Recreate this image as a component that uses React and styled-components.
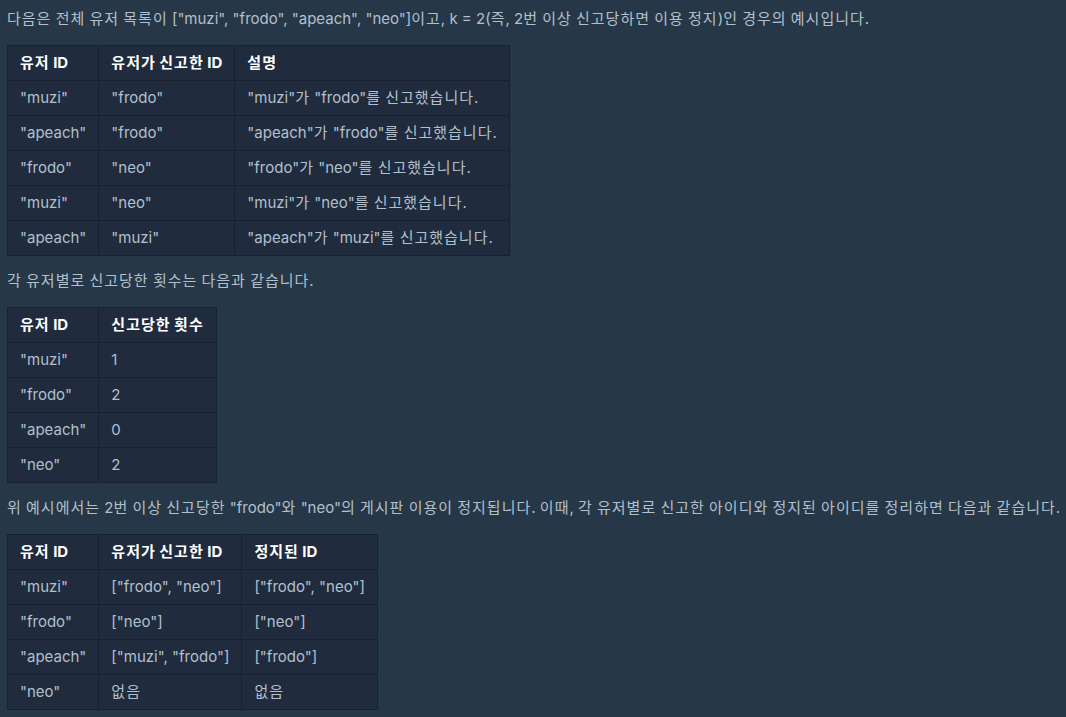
import React from 'react';
import styled, { createGlobalStyle } from "styled-components";

const GlobalStyle = createGlobalStyle`
	html, body {
		margin: 0;
		background: #263747;
	}
	body {
		font-family: Inter, "Noto Sans CJK KR", sans-serif;
		font-size: 15px;
		line-height: 22px;
		color: #b2c0cc;
	}
`;

const reports = [
    ['"muzi"', '"frodo"', '"muzi"가 "frodo"를 신고했습니다.'],
    ['"apeach"', '"frodo"', '"apeach"가 "frodo"를 신고했습니다.'],
    ['"frodo"', '"neo"', '"frodo"가 "neo"를 신고했습니다.'],
    ['"muzi"', '"neo"', '"muzi"가 "neo"를 신고했습니다.'],
    ['"apeach"', '"muzi"', '"apeach"가 "muzi"를 신고했습니다.'],
];

const counts = [
    ['"muzi"', '1'],
    ['"frodo"', '2'],
    ['"apeach"', '0'],
    ['"neo"', '2'],
];

const results = [
    ['"muzi"', '["frodo", "neo"]', '["frodo", "neo"]'],
    ['"frodo"', '["neo"]', '["neo"]'],
    ['"apeach"', '["muzi", "frodo"]', '["frodo"]'],
    ['"neo"', '없음', '없음'],
];

// hangul runs get a little extra tracking so they sit as wide as the original font
function Ko({ children }) {
    return children.split(/([가-힣]+)/).map((part, i) =>
        /[가-힣]/.test(part) ? <Hangul key={i}>{part}</Hangul> : part
    );
}

function DataTable({ head, rows }) {
    return (
        <Table>
            <thead>
                <tr>
                    {head.map((h) => <Th key={h}><Ko>{h}</Ko></Th>)}
                </tr>
            </thead>
            <tbody>
                {rows.map((row, i) => (
                    <tr key={i}>
                        {row.map((cell, j) => <Td key={j}><Ko>{cell}</Ko></Td>)}
                    </tr>
                ))}
            </tbody>
        </Table>
    );
}

function App() {
    return (
        <>
            <GlobalStyle />
            <Page>
                <Text><Ko>{'다음은 전체 유저 목록이 ["muzi", "frodo", "apeach", "neo"]이고, k = 2(즉, 2번 이상 신고당하면 이용 정지)인 경우의 예시입니다.'}</Ko></Text>
                <DataTable head={['유저 ID', '유저가 신고한 ID', '설명']} rows={reports} />
                <Text><Ko>각 유저별로 신고당한 횟수는 다음과 같습니다.</Ko></Text>
                <DataTable head={['유저 ID', '신고당한 횟수']} rows={counts} />
                <Text><Ko>{'위 예시에서는 2번 이상 신고당한 "frodo"와 "neo"의 게시판 이용이 정지됩니다. 이때, 각 유저별로 신고한 아이디와 정지된 아이디를 정리하면 다음과 같습니다.'}</Ko></Text>
                <DataTable head={['유저 ID', '유저가 신고한 ID', '정지된 ID']} rows={results} />
            </Page>
        </>
    );
}

const Page = styled.main`
	padding: 8px 7px;
`;

const Text = styled.p`
	margin: 0 0 15px;
	white-space: nowrap;
`;

const Hangul = styled.span`
	letter-spacing: 1px;
`;

const Table = styled.table`
	border-collapse: collapse;
	background: #202b3d;
	border: 1px solid #172130;
	margin-bottom: 14px;
`;

const Th = styled.th`
	padding: 6px 12px;
	text-align: left;
	font-weight: 700;
	color: #ffffff;
	border: 1px solid #172130;
	white-space: nowrap;
`;

const Td = styled.td`
	padding: 6px 12px;
	border: 1px solid #172130;
	white-space: nowrap;
`;

export default App;
